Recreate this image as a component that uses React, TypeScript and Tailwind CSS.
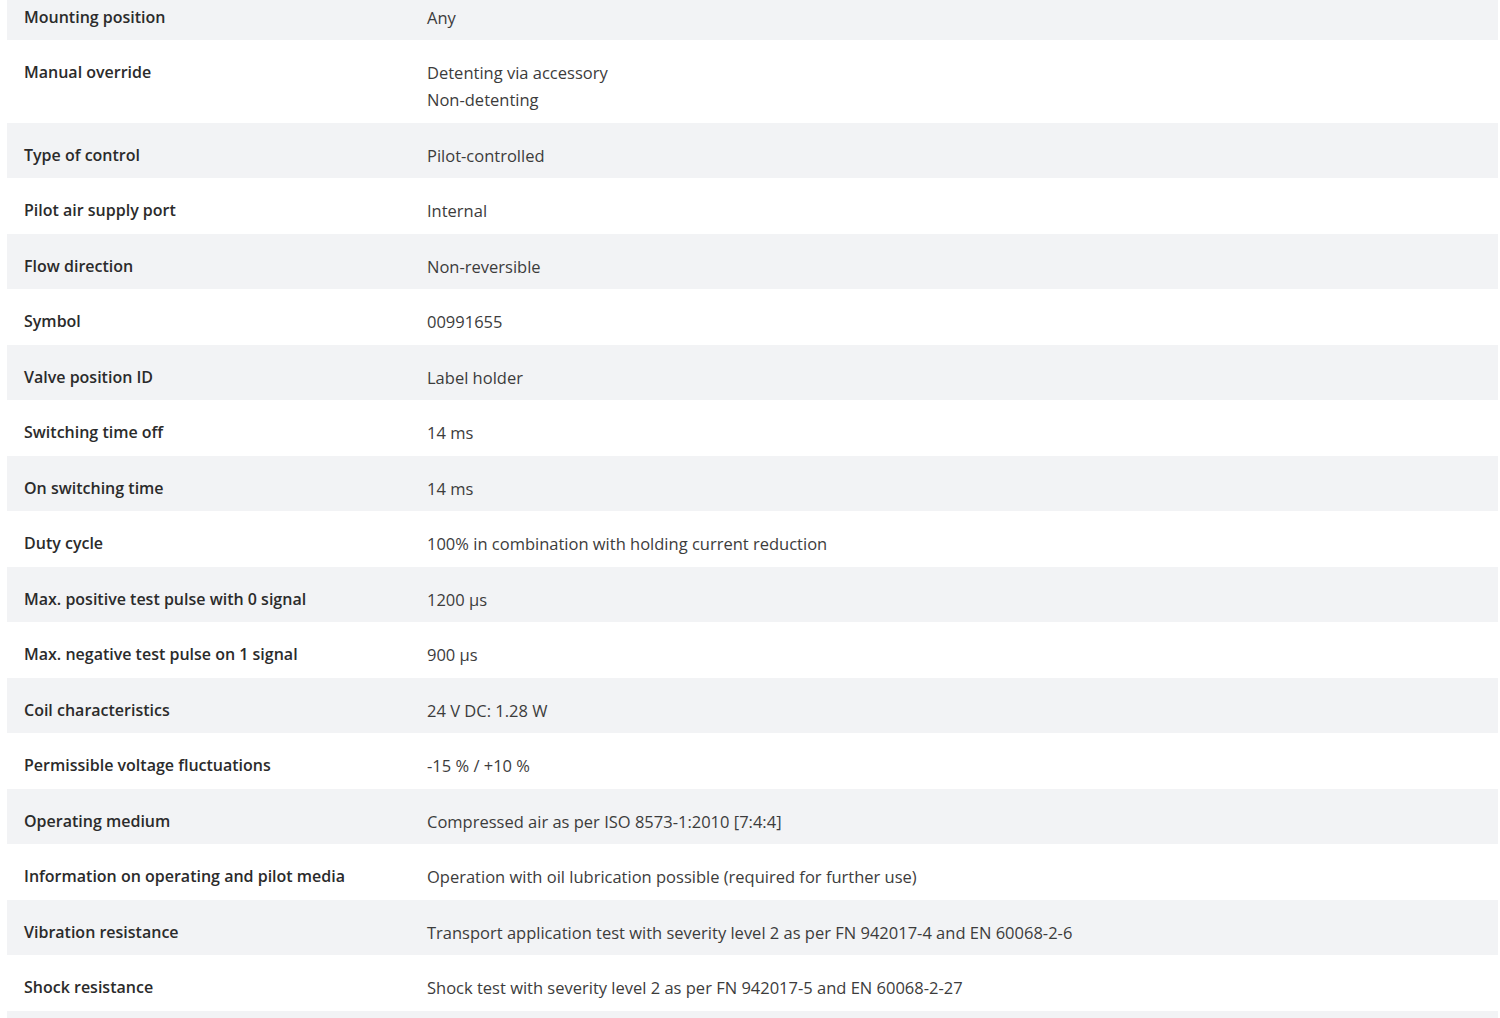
const ROWS: { label: string; values: string[] }[] = [
  { label: 'Mounting position', values: ['Any'] },
  { label: 'Manual override', values: ['Detenting via accessory', 'Non-detenting'] },
  { label: 'Type of control', values: ['Pilot-controlled'] },
  { label: 'Pilot air supply port', values: ['Internal'] },
  { label: 'Flow direction', values: ['Non-reversible'] },
  { label: 'Symbol', values: ['00991655'] },
  { label: 'Valve position ID', values: ['Label holder'] },
  { label: 'Switching time off', values: ['14 ms'] },
  { label: 'On switching time', values: ['14 ms'] },
  { label: 'Duty cycle', values: ['100% in combination with holding current reduction'] },
  { label: 'Max. positive test pulse with 0 signal', values: ['1200 µs'] },
  { label: 'Max. negative test pulse on 1 signal', values: ['900 µs'] },
  { label: 'Coil characteristics', values: ['24 V DC: 1.28 W'] },
  { label: 'Permissible voltage fluctuations', values: ['-15 % / +10 %'] },
  { label: 'Operating medium', values: ['Compressed air as per ISO 8573-1:2010 [7:4:4]'] },
  { label: 'Information on operating and pilot media', values: ['Operation with oil lubrication possible (required for further use)'] },
  { label: 'Vibration resistance', values: ['Transport application test with severity level 2 as per FN 942017-4 and EN 60068-2-6'] },
  { label: 'Shock resistance', values: ['Shock test with severity level 2 as per FN 942017-5 and EN 60068-2-27'] },
]

export default function App() {
  return (
    <div className="min-h-screen overflow-hidden bg-white font-['Open_Sans',sans-serif] leading-[27px] text-[#333]">
      <div className="ml-[7px] mr-[2px] -mt-[15.5px]">
        {ROWS.map((row, i) => (
          <div
            key={row.label}
            className={`grid grid-cols-[420px_1fr] pt-[19px] pb-[9.5px] ${i % 2 === 0 ? 'bg-[#f2f3f5]' : 'bg-white'}`}
          >
            <div className="pl-[17px] text-[16px] font-semibold text-[#2b2b2b]">{row.label}</div>
            <div className="text-[16.5px] text-[#3c3c3c]">
              {row.values.map((v) => (
                <div key={v}>{v}</div>
              ))}
            </div>
          </div>
        ))}
        {/* next row, scrolled off below */}
        <div className="h-[30px] bg-[#f2f3f5]" />
      </div>
    </div>
  )
}
